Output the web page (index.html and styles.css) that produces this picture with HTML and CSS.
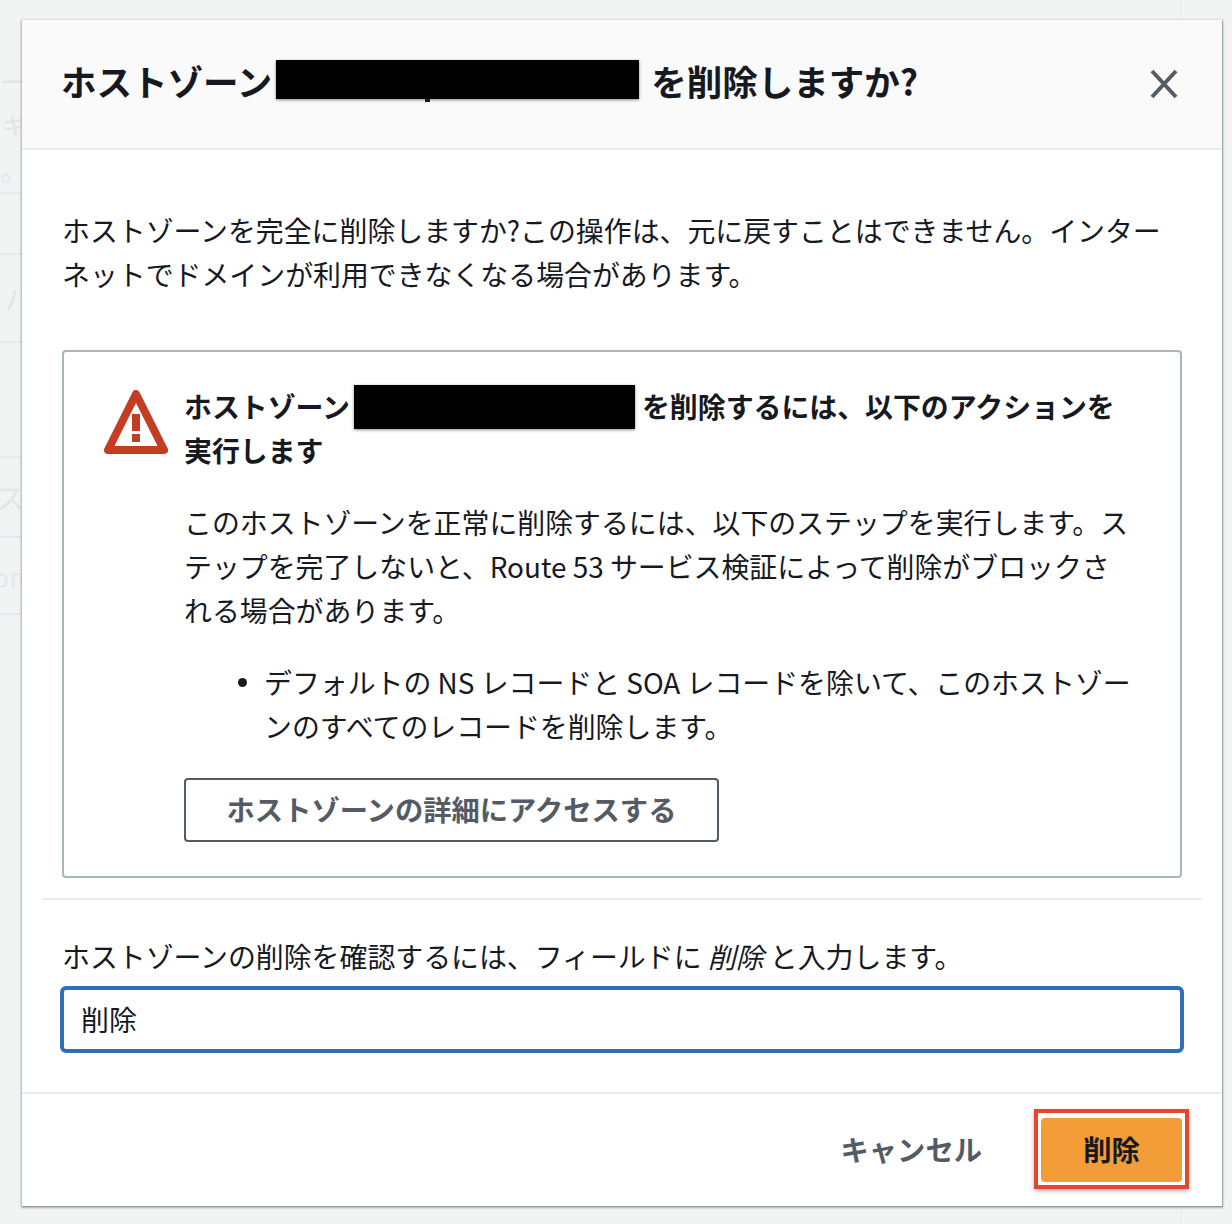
FILE: index.html
```html
<!DOCTYPE html>
<html lang="ja">
<head>
<meta charset="utf-8">
<title>ホストゾーンを削除</title>
<link rel="stylesheet" href="styles.css">
</head>
<body>
<div class="backdrop" aria-hidden="true">
  <div class="bd-row bd-r1"><span class="bd-text">ー</span></div>
  <div class="bd-row bd-r2"><span class="bd-text bd-small">キ</span></div>
  <div class="bd-row bd-r3"><span class="bd-text bd-blue">。</span></div>
  <div class="bd-row bd-r4"></div>
  <div class="bd-row bd-r5"><span class="bd-text bd-pa">パ</span></div>
  <div class="bd-row bd-r6"></div>
  <div class="bd-row bd-r7"><span class="bd-text bd-su">ス</span></div>
  <div class="bd-row bd-r8"><span class="bd-text bd-blue bd-ore">ore</span></div>
</div>
<div class="bd-rail" aria-hidden="true"></div>

<main class="dialog">
  <header class="dialog-head">
    <h1 class="title">ホストゾーン<span class="redact redact-title"></span><span class="title-rest">を削除しますか?</span></h1>
    <svg class="close" viewBox="0 0 28 30" aria-label="閉じる">
      <path d="M2 2 L26 28 M26 2 L2 28" fill="none" stroke="#545b64" stroke-width="4"/>
    </svg>
  </header>

  <section class="dialog-body">
    <p class="lead">ホストゾーンを完全に削除しますか?この操作は、元に戻すことはできません。インターネットでドメインが利用できなくなる場合があります。</p>

    <div class="alert">
      <svg class="alert-icon" viewBox="0 0 64 64">
        <path d="M32 4 L60 60 H4 Z" fill="#fff" stroke="#c33d22" stroke-width="8" stroke-linejoin="round"/>
        <rect x="28" y="24" width="8" height="17" fill="#c33d22"/>
        <rect x="28" y="44" width="8" height="8" fill="#c33d22"/>
      </svg>
      <div class="alert-content">
        <h2 class="alert-title">ホストゾーン<span class="redact redact-alert"></span>を削除するには、以下のアクションを実行します</h2>
        <p class="alert-text">このホストゾーンを正常に削除するには、以下のステップを実行します。ステップを完了しないと、Route 53 サービス検証によって削除がブロックされる場合があります。</p>
        <ul class="alert-list">
          <li>デフォルトの NS レコードと SOA レコードを除いて、このホストゾーンのすべてのレコードを削除します。</li>
        </ul>
        <button class="btn-outline" type="button">ホストゾーンの詳細にアクセスする</button>
      </div>
    </div>

    <div class="confirm">
      <label class="confirm-label" for="confirm-input">ホストゾーンの削除を確認するには、フィールドに <em>削除</em> と入力します。</label>
      <input class="confirm-input" id="confirm-input" type="text" value="削除">
    </div>
  </section>

  <footer class="dialog-foot">
    <button class="btn-link" type="button">キャンセル</button>
    <div class="primary-wrap">
      <button class="btn-primary" type="button">削除</button>
      <span class="annotation"></span>
    </div>
  </footer>
</main>
</body>
</html>
```

FILE: styles.css
```css
* { box-sizing: border-box; }

html, body { height: 100%; }

body {
  margin: 0;
  position: relative;
  height: 1224px;
  overflow: hidden;
  background: #f2f3f3;
  color: #16191f;
  font-family: "Noto Sans CJK JP", "Noto Sans", sans-serif;
  padding: 20px 10px 18px 22px;
}

/* faded page behind the modal */
.backdrop {
  position: absolute;
  left: 0;
  top: 0;
  width: 22px;
  overflow: hidden;
}
.bd-row {
  border-bottom: 2px solid #e8ebeb;
  white-space: nowrap;
  overflow: hidden;
  color: #e2e5e5;
  font-size: 28px;
  line-height: 40px;
  display: flex;
  align-items: center;
}
.bd-text { display: block; }
.bd-small { font-size: 24px; margin-left: 2px; }
.bd-blue { color: #e0e8f3; }
.bd-pa { margin-left: 5px; }
.bd-su { margin-left: -4px; }
.bd-ore { margin-left: -8px; }
.bd-r1 { height: 105px; padding-top: 57px; border-bottom: 0; }
.bd-r2 { height: 40px; border-bottom: 0; }
.bd-r3 { height: 49px; }
.bd-r4 { height: 61px; }
.bd-r5 { height: 88px; }
.bd-r6 { height: 115px; }
.bd-r7 { height: 80px; border-bottom-color: #e2e8f2; }
.bd-r8 { height: 77px; border-bottom-color: #e2e8f2; }

.bd-rail {
  position: absolute;
  left: 1181px;
  top: 0;
  width: 51px;
  height: 1224px;
  border-left: 1px solid #eceeee;
}

.dialog {
  position: relative;
  width: 1200px;
  height: 1186px;
  background: #fff;
  box-shadow: 0 1px 2px 1px rgba(0, 28, 36, 0.3), 1px 1px 1px rgba(0, 28, 36, 0.15);
  display: flex;
  flex-direction: column;
}

.dialog-head {
  height: 130px;
  flex: none;
  background: #fafafa;
  border-bottom: 2px solid #eaeded;
  padding: 0 44px 0 39px;
  display: flex;
  align-items: center;
  justify-content: space-between;
}

.title {
  margin: 0;
  font-size: 35.5px;
  font-weight: 700;
  line-height: 44px;
  display: flex;
  align-items: center;
  white-space: nowrap;
  position: relative;
  top: -3px;
}

.title-rest { margin-left: 12px; }

.redact {
  display: inline-block;
  background: #000;
  box-shadow: 0 1px 3px rgba(0, 0, 0, 0.45);
}
.redact-title { position: relative; width: 363px; height: 39px; margin: -3px 0 0 4px; }
.redact-title::after {
  content: "";
  position: absolute;
  left: 149px;
  bottom: -3px;
  width: 5px;
  height: 3px;
  background: #16191f;
}
.redact-alert { width: 281px; height: 44px; vertical-align: middle; margin: -12px 7px -6px 4px; }

.close { width: 28px; height: 30px; flex: none; }

.dialog-body {
  flex: 1;
  padding: 58px 20px 0;
  font-size: 27.9px;
  line-height: 44px;
}

.lead { margin: 0 20px 54px 20px; }

.alert {
  margin: 0 20px 0 20px;
  height: 528px;
  border: 2px solid #aab7b8;
  border-radius: 4px;
  padding: 32px 40px 0;
  display: flex;
  gap: 16px;
}

.alert-icon { width: 64px; height: 64px; flex: none; margin-top: 6px; }

.alert-content { flex: 1; min-width: 0; }

.alert-title {
  margin: 0 0 28px;
  font-size: 27.9px;
  line-height: 44px;
  font-weight: 700;
}

.alert-text { margin: 0 0 28px; padding-right: 8px; }

.alert-list {
  margin: 0 0 30px;
  padding: 0 0 0 80px;
  list-style: none;
}
.alert-list li { position: relative; }
.alert-list li::before {
  content: "";
  position: absolute;
  left: -26px;
  top: 18px;
  width: 9px;
  height: 9px;
  border-radius: 50%;
  background: #16191f;
}

.btn-outline {
  display: block;
  width: 535px;
  height: 64px;
  padding: 0 0 2px;
  background: #fff;
  border: 2px solid #545b64;
  border-radius: 4px;
  color: #545b64;
  font: 700 28.3px/44px "Noto Sans CJK JP", "Noto Sans", sans-serif;
}

.confirm {
  margin-top: 20px;
  border-top: 2px solid #eaeded;
  padding: 34px 0 0 20px;
}

.confirm-label { display: block; margin-bottom: 8px; }
.confirm-label em { font-style: italic; }

.confirm-input {
  display: block;
  width: 1124px;
  height: 67px;
  margin-left: -2px;
  padding: 0 17px 2px;
  border: 4px solid #2f6fb5;
  border-radius: 6px;
  outline: 0;
  background: #fff;
  color: #16191f;
  font: 400 27.9px/44px "Noto Sans CJK JP", "Noto Sans", sans-serif;
}

.dialog-foot {
  height: 114px;
  flex: none;
  border-top: 2px solid #eaeded;
  padding: 24px 40px 0 0;
  display: flex;
  justify-content: flex-end;
  align-items: flex-start;
  gap: 59px;
}

.btn-link {
  height: 64px;
  padding: 0 0 2px;
  border: 0;
  background: transparent;
  color: #545b64;
  font: 700 28.3px/44px "Noto Sans CJK JP", "Noto Sans", sans-serif;
}

.primary-wrap { position: relative; }

.btn-primary {
  display: block;
  width: 141px;
  height: 64px;
  padding: 0 0 2px;
  border: 0;
  border-radius: 4px;
  background: #f29d38;
  color: #16191f;
  font: 700 28.3px/44px "Noto Sans CJK JP", "Noto Sans", sans-serif;
}

/* red highlight drawn over the screenshot */
.annotation {
  position: absolute;
  left: -7px;
  top: -9px;
  right: -7px;
  bottom: -7px;
  border: 4px solid #e8462a;
  box-shadow: 0 2px 4px rgba(0, 0, 0, 0.3);
  pointer-events: none;
}
```
